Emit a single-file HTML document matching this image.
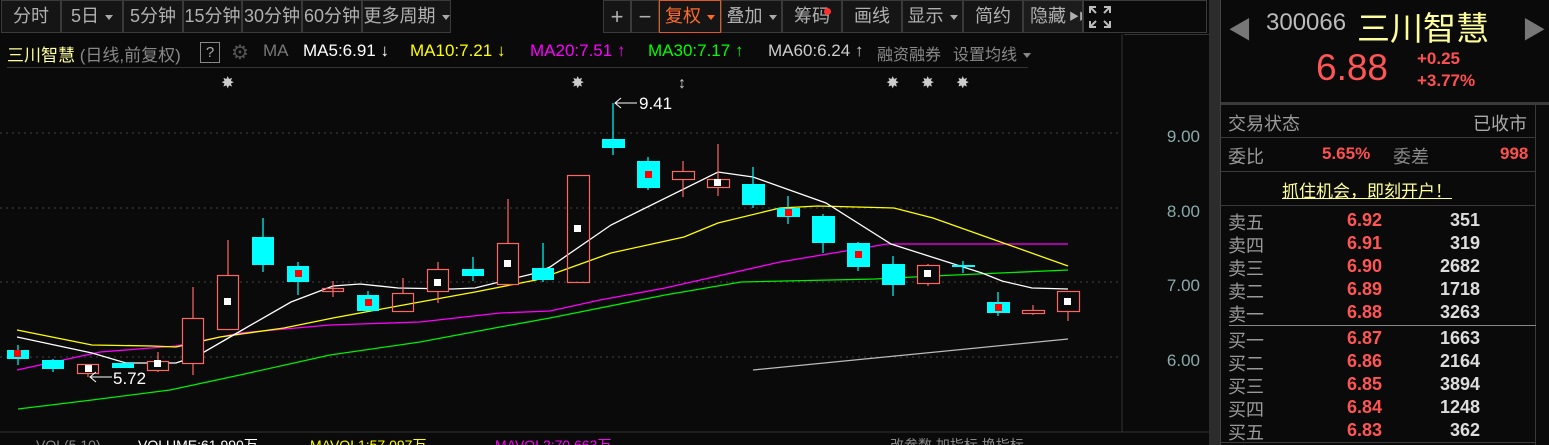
<!DOCTYPE html>
<html><head><meta charset="utf-8"><style>
*{margin:0;padding:0;box-sizing:border-box}
body{width:1549px;height:445px;background:#0a0a0a;overflow:hidden;position:relative;font-family:"Liberation Sans","Noto Sans CJK SC",sans-serif;color:#bbb}
.a{position:absolute;white-space:nowrap}
.btn{position:absolute;top:0;height:33px;background:#151515;border:1px solid #3a3a3a;color:#b0b0b0;font-size:18px;line-height:31px;text-align:center;white-space:nowrap;overflow:hidden}
.tri{display:inline-block;width:0;height:0;border-left:4px solid transparent;border-right:4px solid transparent;border-top:5px solid #aaa;vertical-align:middle;margin-left:6px}
.r{color:#ff5050;font-weight:bold}
.rp .lbl{position:absolute;left:1228px;font-size:18px;color:#9a9a9a}
.rp .p{position:absolute;left:1300px;width:82px;text-align:right;font-size:18px;color:#ff5555;font-weight:bold}
.rp .v{position:absolute;left:1400px;width:80px;text-align:right;font-size:18px;color:#ddd;font-weight:bold}
</style></head><body>
<div class="btn" style="left:1px;width:60px">分时</div>
<div class="btn" style="left:61px;width:62px">5日<span class="tri"></span></div>
<div class="btn" style="left:123px;width:60px">5分钟</div>
<div class="btn" style="left:183px;width:59px">15分钟</div>
<div class="btn" style="left:242px;width:60px">30分钟</div>
<div class="btn" style="left:302px;width:60px">60分钟</div>
<div class="btn" style="left:362px;width:89px">更多周期<span class="tri"></span></div>
<div class="btn" style="left:603px;width:28px;font-size:22px">+</div>
<div class="btn" style="left:631px;width:28px;font-size:22px">−</div>
<div class="btn" style="left:659px;width:62px;color:#ff6a2a;border-color:#e05a20">复权<span class="tri" style="border-top-color:#ff6a2a"></span></div>
<div class="btn" style="left:721px;width:61px">叠加<span class="tri"></span></div>
<div class="btn" style="left:782px;width:60px">筹码<span style="position:absolute;left:41px;top:7px;width:7px;height:7px;border-radius:50%;background:#ff3030"></span></div>
<div class="btn" style="left:842px;width:60px">画线</div>
<div class="btn" style="left:902px;width:61px">显示<span class="tri"></span></div>
<div class="btn" style="left:963px;width:60px">简约</div>
<div class="btn" style="left:1023px;width:60px;background:#1c1c1c;text-align:left;padding-left:6px">隐藏<span style="font-size:10px;margin-left:3px;vertical-align:middle">▶▶</span></div>
<div class="btn" style="left:1083px;width:124px;background:#0a0a0a;border-color:#3a3a3a;text-align:left;padding-left:4px">
<svg width="24" height="24" viewBox="0 0 24 24" style="margin-top:4px" fill="none" stroke="#bbb" stroke-width="2"><path d="M2 8V2h6M16 2h6v6M22 16v6h-6M8 22H2v-6M3 3l5 5M21 3l-5 5M21 21l-5-5M3 21l5-5"/></svg></div>
<div class="a" style="left:7px;top:41px;font-size:17px"><span style="color:#ffff9a">三川智慧</span> <span style="color:#888">(日线,前复权)</span></div>
<div class="a" style="left:200px;top:42px;width:20px;height:21px;border:1px solid #888;color:#aaa;font-size:15px;text-align:center;line-height:19px">?</div>
<div class="a" style="left:231px;top:40px;font-size:20px;color:#555">⚙</div>
<div class="a" style="left:263px;top:41px;font-size:17px;color:#777">MA</div>
<div class="a" style="left:303px;top:41px;font-size:17px;color:#fff">MA5:6.91 ↓</div>
<div class="a" style="left:410px;top:41px;font-size:17px;color:#ffff00">MA10:7.21 ↓</div>
<div class="a" style="left:530px;top:41px;font-size:17px;color:#ff00ff">MA20:7.51 ↑</div>
<div class="a" style="left:648px;top:41px;font-size:17px;color:#00ff00">MA30:7.17 ↑</div>
<div class="a" style="left:768px;top:41px;font-size:17px;color:#ccc">MA60:6.24 ↑</div>
<div class="a" style="left:877px;top:41px;font-size:16px;color:#888">融资融券</div>
<div class="a" style="left:953px;top:41px;font-size:16px;color:#888">设置均线 <span class="tri" style="margin-left:2px;border-top-color:#888"></span></div>
<div class="a" style="left:7px;top:67px;width:1021px;height:1px;background:#333"></div>
<div class="a" style="left:1209px;top:0;width:11px;height:445px;background:#2c2c2c"></div>
<div class="a" style="left:1124px;top:34px;width:85px;height:1px;background:#333"></div>
<svg class="a" style="left:0;top:0" width="1209" height="445">
<line x1="1122" y1="34" x2="1122" y2="432" stroke="#333"/>
<g stroke="#444" stroke-dasharray="2,4"><line x1="0" y1="133" x2="1120" y2="133"/><line x1="0" y1="208" x2="1120" y2="208"/><line x1="0" y1="282" x2="1120" y2="282"/><line x1="0" y1="357" x2="1120" y2="357"/></g>
<g fill="#8aa" font-size="17" text-anchor="end" font-family="Liberation Sans"><text x="1200" y="142">9.00</text><text x="1200" y="217">8.00</text><text x="1200" y="291">7.00</text><text x="1200" y="366">6.00</text></g>
<line x1="0" y1="432" x2="1209" y2="432" stroke="#333"/>
<g fill="#ccc" font-size="16" font-family="Liberation Sans"><text x="221" y="88">✸</text><text x="571" y="88">✸</text><text x="886" y="88">✸</text><text x="921" y="88">✸</text><text x="956" y="88">✸</text><text x="678" y="88">↕</text></g>
<g fill="none" stroke-width="1.3">
<polyline stroke="#00ee00" points="18,409 92,400 170,390 240,375 330,355 420,342 500,327 550,318 665,295 741,282 875,279 933,276 1068,270"/>
<polyline stroke="#ff00ff" points="17,370 100,352 176,346 240,333 330,325 420,322 500,313 550,311 600,300 665,288 780,262 887,244 1068,244"/>
<polyline stroke="#ffff00" points="17,330 92,345 152,346 176,347 220,337 284,328 333,318 398,306 475,292 536,280 550,275 611,253 684,237 718,223 780,208 818,206 894,208 933,218 1009,245 1068,266"/>
<polyline stroke="#fff" points="17,337 92,353 126,363 176,363 199,355 237,333 291,302 333,286 360,284 398,288 452,289 475,288 536,273 550,267 611,225 718,172 753,177 826,203 891,244 982,273 1002,281 1032,288 1068,289"/>
<polyline stroke="#bbb" points="753,370 1068,339"/>
</g>
<g stroke-width="1.2">
<line x1="18" y1="345" x2="18" y2="365" stroke="#0ff"/><rect x="7" y="350" width="22" height="9" fill="#0ff"/>
<line x1="53" y1="359" x2="53" y2="372" stroke="#0ff"/><rect x="42" y="360" width="22" height="9" fill="#0ff"/>
<line x1="88" y1="373" x2="88" y2="377" stroke="#f66"/><rect x="77.5" y="364.5" width="21" height="9" fill="none" stroke="#f66"/>
<rect x="112" y="363" width="22" height="5" fill="#0ff"/>
<line x1="158" y1="352" x2="158" y2="372" stroke="#f66"/><rect x="147.5" y="361.5" width="21" height="9" fill="#0a0a0a" stroke="#f66"/>
<line x1="193" y1="287" x2="193" y2="375" stroke="#f66"/><rect x="182.5" y="318.5" width="21" height="45" fill="#0a0a0a" stroke="#f66"/>
<line x1="228" y1="240" x2="228" y2="329" stroke="#f66"/><rect x="217.5" y="275.5" width="21" height="54" fill="#0a0a0a" stroke="#f66"/>
<line x1="263" y1="218" x2="263" y2="272" stroke="#0ff"/><rect x="252" y="237" width="22" height="28" fill="#0ff"/>
<line x1="298" y1="262" x2="298" y2="295" stroke="#0ff"/><rect x="287" y="266" width="22" height="16" fill="#0ff"/>
<line x1="333" y1="281" x2="333" y2="297" stroke="#f66"/><rect x="322.5" y="288.5" width="21" height="3" fill="none" stroke="#f66"/>
<line x1="368" y1="291" x2="368" y2="296" stroke="#0ff"/><rect x="357" y="295" width="22" height="16" fill="#0ff"/>
<line x1="403" y1="278" x2="403" y2="293" stroke="#f66"/><rect x="392.5" y="293.5" width="21" height="18" fill="none" stroke="#f66"/>
<line x1="438" y1="262" x2="438" y2="303" stroke="#f66"/><rect x="427.5" y="269.5" width="21" height="22" fill="#0a0a0a" stroke="#f66"/>
<line x1="473" y1="257" x2="473" y2="281" stroke="#0ff"/><rect x="462" y="269" width="22" height="7" fill="#0ff"/>
<line x1="508" y1="199" x2="508" y2="243" stroke="#f66"/><rect x="497.5" y="243.5" width="21" height="41" fill="#0a0a0a" stroke="#f66"/>
<line x1="543" y1="243" x2="543" y2="282" stroke="#0ff"/><rect x="532" y="268" width="22" height="12" fill="#0ff"/>
<rect x="567.5" y="175.5" width="22" height="107" fill="none" stroke="#f66"/>
<line x1="613" y1="103" x2="613" y2="155" stroke="#0ff"/><rect x="602" y="139" width="23" height="9" fill="#0ff"/>
<line x1="648" y1="157" x2="648" y2="190" stroke="#0ff"/><rect x="637" y="161" width="23" height="27" fill="#0ff"/>
<line x1="683" y1="161" x2="683" y2="197" stroke="#f66"/><rect x="672.5" y="171.5" width="22" height="8" fill="#0a0a0a" stroke="#f66"/>
<line x1="718" y1="144" x2="718" y2="196" stroke="#f66"/><rect x="707.5" y="179.5" width="22" height="8" fill="#0a0a0a" stroke="#f66"/>
<line x1="753" y1="167" x2="753" y2="208" stroke="#0ff"/><rect x="742" y="184" width="23" height="21" fill="#0ff"/>
<line x1="788" y1="196" x2="788" y2="224" stroke="#0ff"/><rect x="777" y="208" width="23" height="9" fill="#0ff"/>
<line x1="823" y1="214" x2="823" y2="253" stroke="#0ff"/><rect x="812" y="216" width="23" height="27" fill="#0ff"/>
<line x1="858" y1="242" x2="858" y2="271" stroke="#0ff"/><rect x="847" y="243" width="23" height="24" fill="#0ff"/>
<line x1="893" y1="256" x2="893" y2="296" stroke="#0ff"/><rect x="882" y="264" width="23" height="21" fill="#0ff"/>
<line x1="928" y1="264" x2="928" y2="286" stroke="#f66"/><rect x="917.5" y="265.5" width="22" height="18" fill="#0a0a0a" stroke="#f66"/>
<line x1="963" y1="261" x2="963" y2="273" stroke="#0ff"/><rect x="952" y="265" width="23" height="2" fill="#0ff"/>
<line x1="998" y1="292" x2="998" y2="316" stroke="#0ff"/><rect x="987" y="302" width="23" height="11" fill="#0ff"/>
<line x1="1033" y1="305" x2="1033" y2="315" stroke="#f66"/><rect x="1022.5" y="310.5" width="22" height="3" fill="#0a0a0a" stroke="#f66"/>
<line x1="1068" y1="311" x2="1068" y2="321" stroke="#f66"/><rect x="1057.5" y="291.5" width="22" height="20" fill="#0a0a0a" stroke="#f66"/>
</g>
<g fill="#f00"><rect x="14" y="350" width="7" height="7"/><rect x="295" y="270" width="7" height="7"/><rect x="365" y="299" width="7" height="7"/><rect x="645" y="171" width="7" height="7"/><rect x="785" y="209" width="7" height="7"/><rect x="855" y="251" width="7" height="7"/><rect x="995" y="304" width="7" height="7"/></g>
<g fill="#fff"><rect x="85" y="365" width="7" height="7"/><rect x="154" y="360" width="7" height="7"/><rect x="224" y="298" width="7" height="7"/><rect x="504" y="260" width="7" height="7"/><rect x="434" y="279" width="7" height="7"/><rect x="574" y="225" width="7" height="7"/><rect x="714" y="179" width="7" height="7"/><rect x="924" y="270" width="7" height="7"/><rect x="1064" y="298" width="7" height="7"/></g>
<g stroke="#fff" fill="none" stroke-width="1"><path d="M615 103h22M621 98l-6 5 6 5"/><path d="M90 377h22M96 372l-6 5 6 5"/></g>
<g fill="#fff" font-size="17" font-family="Liberation Sans"><text x="639" y="109">9.41</text><text x="113" y="384">5.72</text></g>
<g font-size="14" font-family="Liberation Sans,Noto Sans CJK SC"><text x="36" y="450" fill="#888">VOL(5,10)</text><text x="138" y="450" fill="#fff">VOLUME:61,990万</text><text x="310" y="450" fill="#ff0">MAVOL1:57,097万</text><text x="495" y="450" fill="#f0f">MAVOL2:70,663万</text><text x="890" y="450" fill="#888">改参数 加指标 换指标</text></g>
</svg>
<div class="rp">
<div class="a" style="left:1220px;top:0;width:1px;height:445px;background:#444"></div>
<div class="a" style="left:1228px;top:10px;font-size:24px;color:#777">◀</div>
<div class="a" style="left:1266px;top:9px;font-size:24px;color:#bbb">300066</div>
<div class="a" style="left:1357px;top:2px;font-size:33px;color:#ffff99">三川智慧</div>
<div class="a" style="left:1522px;top:10px;font-size:24px;color:#777">▶</div>
<div class="a" style="left:1316px;top:47px;font-size:37px;color:#ff5555">6.88</div>
<div class="a r" style="left:1417px;top:49px;font-size:17px">+0.25</div>
<div class="a r" style="left:1417px;top:71px;font-size:17px">+3.77%</div>
<div class="a" style="left:1221px;top:102px;width:328px;height:3px;background:#3a3a3a"></div>
<div class="lbl" style="top:110px">交易状态</div>
<div class="a" style="left:1473px;top:110px;font-size:18px;color:#aaa">已收市</div>
<div class="a" style="left:1221px;top:137px;width:314px;height:1px;background:#3a3a3a"></div>
<div class="lbl" style="top:143px">委比</div>
<div class="a r" style="left:1322px;top:144px;font-size:17px">5.65%</div>
<div class="a" style="left:1393px;top:143px;font-size:18px;color:#888">委差</div>
<div class="a r" style="left:1500px;top:144px;font-size:17px">998</div>
<div class="a" style="left:1221px;top:171px;width:314px;height:1px;background:#3a3a3a"></div>
<div class="a" style="left:1282px;top:177px;font-size:17px;color:#ffff99;text-decoration:underline">抓住机会，即刻开户！</div>
<div class="a" style="left:1221px;top:205px;width:314px;height:1px;background:#3a3a3a"></div>
<div class="a" style="left:1535px;top:105px;width:1px;height:340px;background:#3a3a3a"></div>
<div class="lbl" style="top:209px">卖五</div><div class="p" style="top:210px">6.92</div><div class="v" style="top:210px">351</div>
<div class="lbl" style="top:232px">卖四</div><div class="p" style="top:233px">6.91</div><div class="v" style="top:233px">319</div>
<div class="lbl" style="top:255px">卖三</div><div class="p" style="top:256px">6.90</div><div class="v" style="top:256px">2682</div>
<div class="lbl" style="top:278px">卖二</div><div class="p" style="top:279px">6.89</div><div class="v" style="top:279px">1718</div>
<div class="lbl" style="top:301px">卖一</div><div class="p" style="top:302px">6.88</div><div class="v" style="top:302px">3263</div>
<div class="a" style="left:1229px;top:325px;width:307px;height:1px;background:#888"></div>
<div class="lbl" style="top:327px">买一</div><div class="p" style="top:328px">6.87</div><div class="v" style="top:328px">1663</div>
<div class="lbl" style="top:350px">买二</div><div class="p" style="top:351px">6.86</div><div class="v" style="top:351px">2164</div>
<div class="lbl" style="top:373px">买三</div><div class="p" style="top:374px">6.85</div><div class="v" style="top:374px">3894</div>
<div class="lbl" style="top:396px">买四</div><div class="p" style="top:397px">6.84</div><div class="v" style="top:397px">1248</div>
<div class="lbl" style="top:419px">买五</div><div class="p" style="top:420px">6.83</div><div class="v" style="top:420px">362</div>
<div class="a" style="left:1221px;top:442px;width:315px;height:1px;background:#3a3a3a"></div>
</div>
</body></html>
